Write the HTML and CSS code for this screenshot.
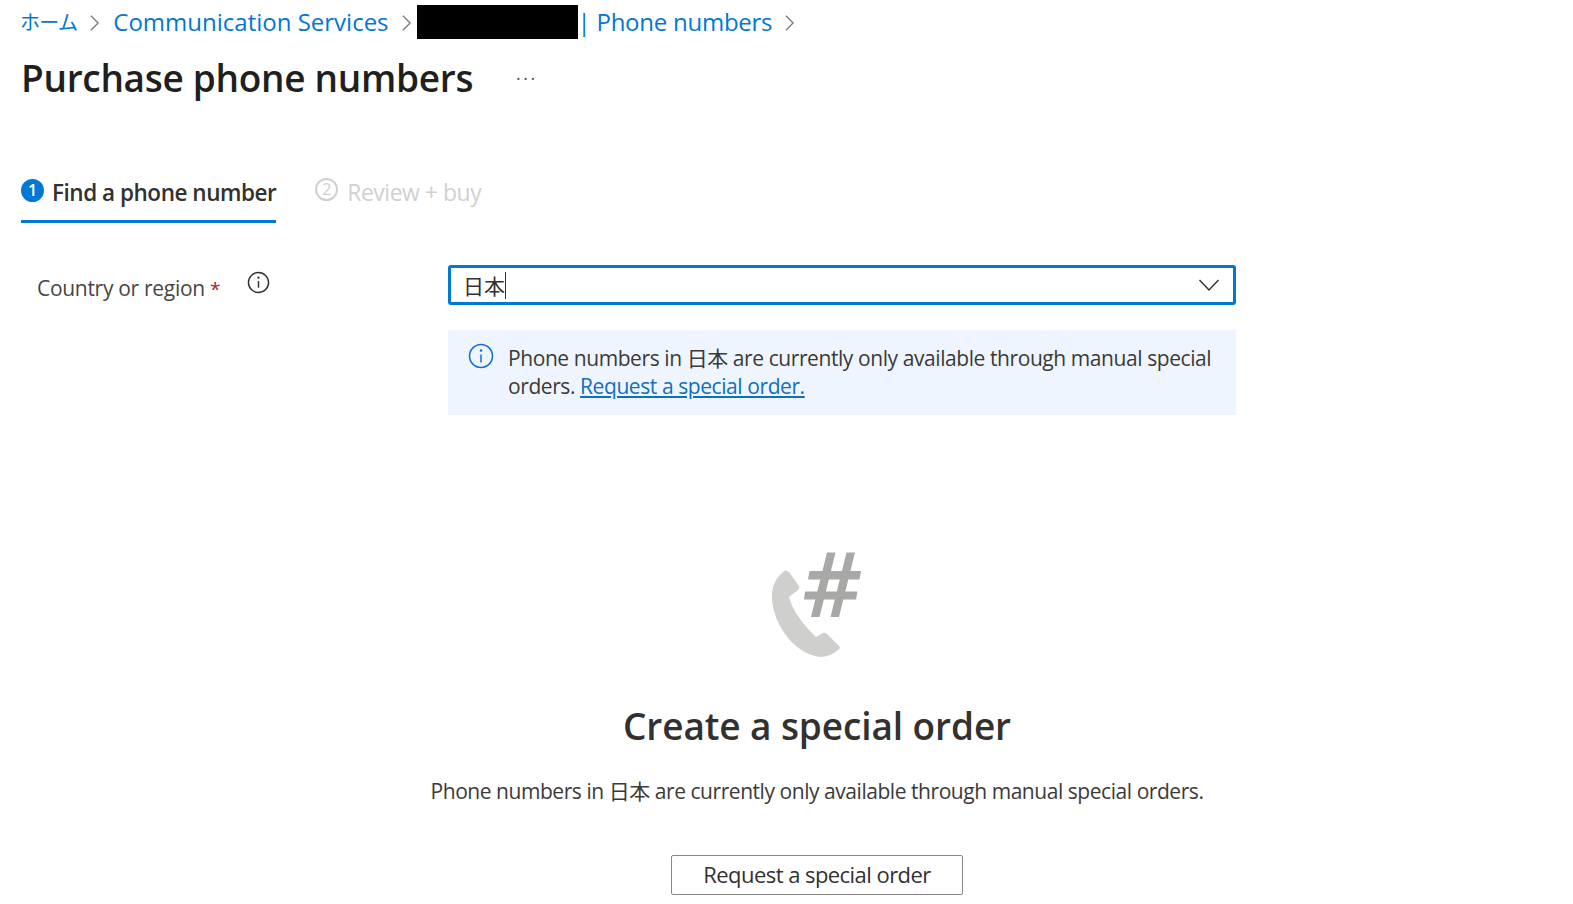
FILE: index.html
```html
<!DOCTYPE html>
<html lang="ja">
<head>
    <meta charset="UTF-8">
    <meta name="viewport" content="width=device-width, initial-scale=1.0">
    <title>Purchase phone numbers</title>
    <link rel="stylesheet" href="styles.css">
</head>
<body>
    <nav class="breadcrumb">
        <a class="crumb-home" href="#">ホーム</a>
        <svg class="crumb-arrow" viewBox="0 0 12 20"><path d="M2 2l8 8-8 8"/></svg>
        <a href="#">Communication Services</a>
        <svg class="crumb-arrow" viewBox="0 0 12 20"><path d="M2 2l8 8-8 8"/></svg>
        <span class="redacted"></span>
        <a class="crumb-blade" href="#">| Phone numbers</a>
        <svg class="crumb-arrow" viewBox="0 0 12 20"><path d="M2 2l8 8-8 8"/></svg>
    </nav>

    <div class="title-row">
        <h1>Purchase phone numbers</h1>
        <span class="more">...</span>
    </div>

    <div class="tabs">
        <div class="tab active">
            <span class="step">1</span>
            <span>Find a phone number</span>
        </div>
        <div class="tab">
            <span class="step">2</span>
            <span>Review + buy</span>
        </div>
    </div>

    <div class="form-row">
        <div class="label-cell">
            <label class="field-label">Country or region <span class="req">*</span></label>
            <svg class="info-icon" viewBox="0 0 24 24"><circle cx="12" cy="12" r="10.5"/><path d="M12 10.5v7"/><circle class="dot" cx="12" cy="7" r="1.2"/></svg>
        </div>
        <div class="field-cell">
            <div class="select">
                <span class="select-value">日本</span><span class="caret"></span>
                <svg class="chevron" viewBox="0 0 22 14"><path d="M1.5 2l9.500 10 9.500-10"/></svg>
            </div>
            <div class="notice">
                <svg class="notice-icon" viewBox="0 0 26 26"><circle cx="13" cy="13" r="11.5"/><path d="M13 11.5v8"/><circle class="dot" cx="13" cy="7.5" r="1.3"/></svg>
                <p>Phone numbers in 日本 are currently only available through manual special orders. <a href="#">Request a special order.</a></p>
            </div>
        </div>
    </div>

    <div class="empty">
        <svg class="phone-icon" viewBox="0 0 150 140">
            <path class="handset" d="M45 39.5Q47 39 49 41L59 55Q60 57 58 59L49 66Q54 85 76 106L83 102Q85 101 87 103L99 115Q101 117 98 119Q90 126 80 126Q55 122 40 95Q31 78 32 62Q33 48 45 39.5Z"/>
            <path class="hash" d="M87 21.500h8.500L79.500 86H71zM106.500 21.500h8.500L99 86h-8.500zM69.500 40h51.500l-1.500 8.500H68zM65 60.500h52.500l-1.500 8H64z"/>
        </svg>
        <h2>Create a special order</h2>
        <p>Phone numbers in 日本 are currently only available through manual special orders.</p>
        <button class="order-button" type="button">Request a special order</button>
    </div>
</body>
</html>
```

FILE: styles.css
```css
body {
    margin: 0;
    height: 904px;
    overflow: hidden;
    background: #ffffff;
    color: #323130;
    font-family: "Open Sans", "Noto Sans CJK JP", sans-serif;
}
a {
    color: #0078d4;
    text-decoration: none;
}
.breadcrumb {
    display: flex;
    align-items: center;
    height: 34px;
    padding: 5px 0 0 20px;
    font-size: 24px;
}
.breadcrumb a {
    margin-bottom: 2px;
}
.crumb-home {
    font-size: 20px;
    letter-spacing: -0.7px;
}
.crumb-arrow {
    width: 11px;
    height: 18px;
    margin: 2px 13px 0 12px;
    fill: none;
    stroke: #777;
    stroke-width: 1.4;
}
.redacted {
    width: 161px;
    height: 34px;
    margin-left: -8px;
    background: #000;
}
.crumb-blade {
    margin-left: 0;
    letter-spacing: -0.25px;
}
.title-row {
    display: flex;
    align-items: center;
    height: 50px;
    margin-top: 13px;
    padding-left: 21px;
}
h1 {
    margin: 0;
    font-size: 37px;
    font-weight: 600;
    letter-spacing: -0.3px;
    color: #201f1e;
}
.more {
    margin: -8px 0 0 43px;
    font-size: 18px;
    color: #555;
    letter-spacing: 2.5px;
}
.tabs {
    display: flex;
    gap: 39px;
    margin: 61px 0 0 21px;
}
.tab {
    display: flex;
    align-items: center;
    gap: 9px;
    height: 60px;
    box-sizing: border-box;
    font-size: 23px;
    letter-spacing: -0.5px;
    color: #d2d0ce;
    border-bottom: 3px solid transparent;
}
.tab.active {
    gap: 8px;
    padding-top: 2px;
    color: #323130;
    font-size: 22.5px;
    font-weight: 600;
    letter-spacing: -0.47px;
    border-bottom-color: #0078d4;
}
.step {
    display: flex;
    align-items: center;
    justify-content: center;
    width: 23px;
    height: 23px;
    margin-top: -5px;
    box-sizing: border-box;
    border: 2px solid #d2d0ce;
    border-radius: 50%;
    font-size: 16px;
    font-weight: 400;
    letter-spacing: 0;
}
.tab.active .step {
    background: #0078d4;
    border-color: #0078d4;
    color: #fff;
    font-weight: 600;
}
.form-row {
    display: grid;
    grid-template-columns: 427px 788px;
    margin: 42px 0 0 21px;
}
.label-cell {
    display: flex;
    align-items: flex-start;
    padding: 9px 0 0 16px;
}
.field-label {
    font-size: 21px;
    letter-spacing: -0.3px;
    color: #484644;
}
.req {
    font-size: 19px;
    color: #a4262c;
}
.info-icon {
    width: 23px;
    height: 23px;
    margin: -3px 0 0 27px;
    fill: none;
    stroke: #323130;
    stroke-width: 1.5;
}
.info-icon .dot {
    fill: #323130;
    stroke: none;
}
.select {
    display: flex;
    align-items: center;
    height: 40px;
    box-sizing: border-box;
    padding: 0 13px 0 12px;
    border: 3px solid #0078d4;
    border-radius: 3px;
    font-size: 21px;
    color: #323130;
}
.caret {
    width: 1px;
    height: 27px;
    background: #323130;
}
.chevron {
    width: 22px;
    height: 14px;
    margin-left: auto;
    fill: none;
    stroke: #323130;
    stroke-width: 1.4;
}
.notice {
    display: flex;
    gap: 14px;
    height: 85px;
    box-sizing: border-box;
    margin-top: 25px;
    padding: 14px 20px 0 20px;
    background: #eff5fe;
}
.notice p {
    margin: 0;
    font-size: 21px;
    line-height: 28px;
    letter-spacing: -0.42px;
    color: #3b3a39;
}
.notice a {
    color: #106ebe;
    text-decoration: underline;
}
.notice-icon {
    flex: none;
    width: 26px;
    height: 26px;
    margin-top: -1px;
    fill: none;
    stroke: #0f6cd8;
    stroke-width: 1.5;
}
.notice-icon .dot {
    fill: #0f6cd8;
    stroke: none;
}
.empty {
    display: flex;
    flex-direction: column;
    align-items: center;
    padding-left: 61px;
    margin-top: 116px;
}
.phone-icon {
    width: 150px;
    height: 140px;
    margin-right: 4px;
}
.handset {
    fill: #cfcfce;
}
.hash {
    fill: #a8a8a7;
}
.empty h2 {
    margin: 29px 0 0;
    font-size: 37px;
    font-weight: 600;
    letter-spacing: -0.1px;
    color: #323130;
}
.empty p {
    margin: 24px 0 0;
    font-size: 21px;
    letter-spacing: -0.45px;
    color: #3b3a39;
}
.order-button {
    width: 292px;
    height: 40px;
    margin-top: 50px;
    padding: 0 0 2px;
    background: #fff;
    border: 1px solid #8a8886;
    border-radius: 2px;
    font-family: inherit;
    font-size: 22px;
    font-weight: 500;
    letter-spacing: -0.55px;
    color: #323130;
}
```
